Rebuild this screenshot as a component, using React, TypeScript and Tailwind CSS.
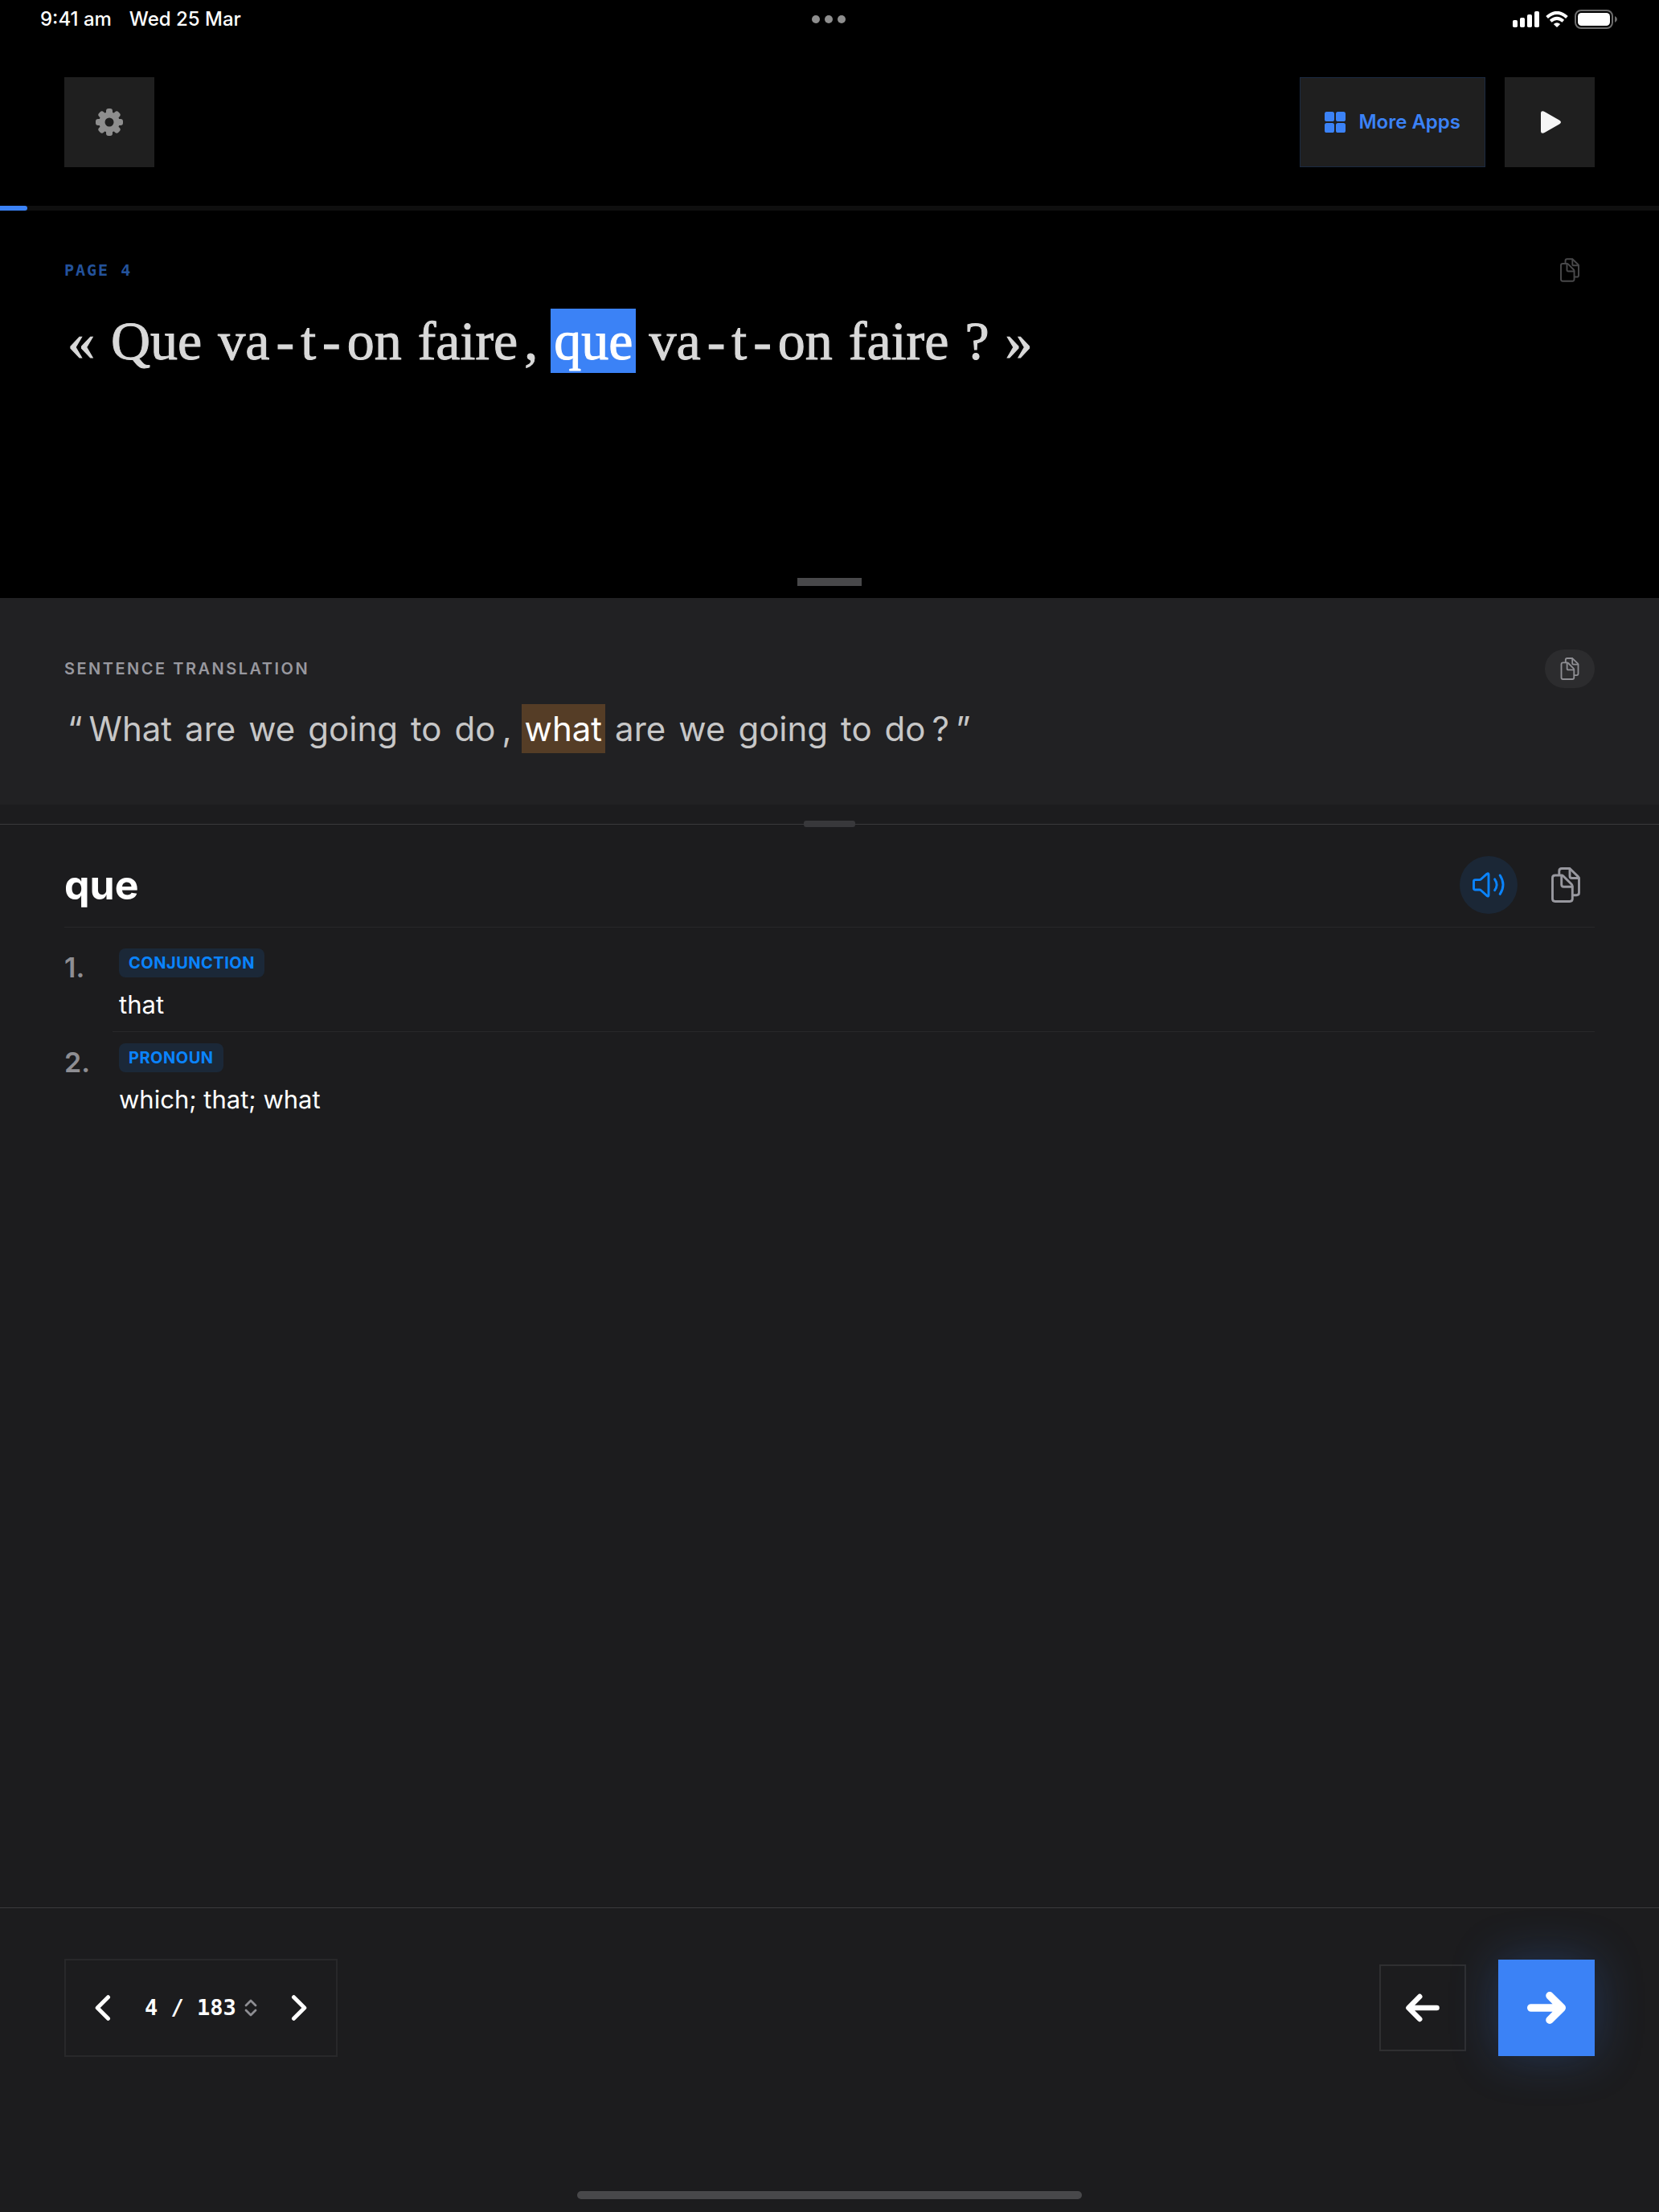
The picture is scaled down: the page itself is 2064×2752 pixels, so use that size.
import { clsx } from "clsx";

type Token = { text: string; tight?: boolean; active?: boolean };

// tight: no gap after the token
const sentence: Token[] = [
  { text: "«" },
  { text: "Que" },
  { text: "va", tight: true },
  { text: "-", tight: true },
  { text: "t", tight: true },
  { text: "-", tight: true },
  { text: "on" },
  { text: "faire", tight: true },
  { text: "," },
  { text: "que", active: true },
  { text: "va", tight: true },
  { text: "-", tight: true },
  { text: "t", tight: true },
  { text: "-", tight: true },
  { text: "on" },
  { text: "faire" },
  { text: "?" },
  { text: "»" },
];

const translation: Token[] = [
  { text: "“", tight: true },
  { text: "What" },
  { text: "are" },
  { text: "we" },
  { text: "going" },
  { text: "to" },
  { text: "do", tight: true },
  { text: "," },
  { text: "what", active: true },
  { text: "are" },
  { text: "we" },
  { text: "going" },
  { text: "to" },
  { text: "do", tight: true },
  { text: "?", tight: true },
  { text: "”" },
];

const definitions = [
  { pos: "CONJUNCTION", text: "that" },
  { pos: "PRONOUN", text: "which; that; what" },
];

function CopyIcon({ className }: { className?: string }) {
  return (
    <svg
      viewBox="0 0 36 44"
      className={className}
      fill="none"
      stroke="currentColor"
      strokeWidth="2.9"
      strokeLinecap="round"
      strokeLinejoin="round"
    >
      <path d="M4.5 10H12.5Q14 10 15 11L25.3 21.3Q26.3 22.3 26.3 24V39.3Q26.3 42.5 23 42.5H4.7Q1.5 42.5 1.5 39.3V13.2Q1.5 10 4.7 10Z" />
      <path d="M12.7 10.4V21.5Q12.7 24.2 15.4 24.2H26" />
      <path d="M9.8 9.6V4.7Q9.8 1.5 13 1.5H21.5Q23 1.5 24 2.5L33.4 11.6Q34.5 12.7 34.5 14.2V31.6Q34.5 34.8 31.3 34.8H27.4" />
      <path d="M23 1.8V11Q23 13.5 25.6 13.5H34.2" />
    </svg>
  );
}

function GearIcon() {
  return (
    <svg viewBox="0 0 34 34" className="size-[34px]">
      <mask id="gear-hole">
        <rect width="34" height="34" fill="#fff" />
        <circle cx="17" cy="17" r="5.5" fill="#000" />
      </mask>
      <g fill="currentColor" mask="url(#gear-hole)">
        <circle cx="17" cy="17" r="12.8" />
        <rect x="13" y="0" width="8" height="34" rx="3" />
        <rect x="13" y="0" width="8" height="34" rx="3" transform="rotate(45 17 17)" />
        <rect x="13" y="0" width="8" height="34" rx="3" transform="rotate(90 17 17)" />
        <rect x="13" y="0" width="8" height="34" rx="3" transform="rotate(135 17 17)" />
      </g>
    </svg>
  );
}

function SpeakerIcon() {
  return (
    <svg
      viewBox="0 0 40 32"
      className="h-8 w-10"
      fill="none"
      stroke="currentColor"
      strokeWidth="2.9"
      strokeLinecap="round"
      strokeLinejoin="round"
    >
      <path d="M3.5 9.6H8.6Q9.8 9.6 10.6 8.8L18 2.1Q20 .8 20 3.2V28.4Q20 30.8 18 29.5L10.6 22.8Q9.8 22 8.6 22H3.5Q1.5 22 1.5 20V11.6Q1.5 9.6 3.5 9.6Z" />
      <path d="M27.6 8.8Q32.6 15.7 27.6 22.6" />
      <path d="M34.2 4Q41.8 15.7 34.2 27.4" />
    </svg>
  );
}

function StatusBar() {
  return (
    <div className="grid h-12 grid-cols-3 items-center pr-[52px] pl-[50px] text-2xl font-medium text-white">
      <div className="flex gap-[22px]">
        <span>9:41 am</span>
        <span>Wed 25 Mar</span>
      </div>
      <div className="flex justify-center gap-[6px]">
        <span className="size-[10px] rounded-full bg-[#8e8e8e]" />
        <span className="size-[10px] rounded-full bg-[#8e8e8e]" />
        <span className="size-[10px] rounded-full bg-[#8e8e8e]" />
      </div>
      <div className="flex items-center justify-end gap-2">
        <svg viewBox="0 0 33 20" className="h-5 w-[33px]" fill="#fff">
          <rect x="0" y="11" width="6" height="9" rx="1.8" />
          <rect x="9" y="8" width="6" height="12" rx="1.8" />
          <rect x="18" y="4" width="6" height="16" rx="1.8" />
          <rect x="27" y="0" width="6" height="20" rx="1.8" />
        </svg>
        <svg viewBox="0 0 28 20" className="h-5 w-7" fill="none" stroke="#fff" strokeWidth="4">
          <path d="M1.6 7.4Q14 -3.6 26.4 7.4" />
          <path d="M6.2 12.2Q14 5.4 21.8 12.2" />
          <path d="M14 20L9.8 16Q14 12.6 18.2 16Z" fill="#fff" stroke="none" />
        </svg>
        <svg viewBox="0 0 53 24" className="h-6 w-[53px]">
          <rect x="1" y="1" width="46" height="22" rx="7" fill="none" stroke="#6e6e6e" strokeWidth="2" />
          <rect x="4" y="4" width="40" height="16" rx="4.5" fill="#fff" />
          <path d="M50 8Q53 9.4 53 12Q53 14.6 50 16Z" fill="#6e6e6e" />
        </svg>
      </div>
    </div>
  );
}

function Tokens({ tokens, gap, highlight }: { tokens: Token[]; gap: string; highlight: string }) {
  return (
    <>
      {tokens.map((token, i) => (
        <span key={i} className={clsx("px-1", !token.tight && gap, token.active && highlight)}>
          {token.text}
        </span>
      ))}
    </>
  );
}

export default function App() {
  return (
    <div className="flex min-h-screen flex-col bg-[#1c1c1e] font-['Inter','Liberation_Sans',sans-serif] text-white">
      <div className="flex flex-col bg-black">
        <StatusBar />

        <header className="flex items-center justify-between px-20 py-12">
          <button type="button" aria-label="Settings" className="flex size-28 items-center justify-center bg-[#1f1f1f] text-[#8e8e8e]">
            <GearIcon />
          </button>
          <div className="flex gap-6">
            <button
              type="button"
              className="flex h-28 items-center gap-4 border border-[#1b2a42] bg-[#1f1f1f] px-[30px] text-2xl font-semibold text-[#3b82f6]"
            >
              <svg viewBox="0 0 26 26" className="size-[26px]" fill="currentColor">
                <rect x="0" y="0" width="12" height="12" rx="2.6" />
                <rect x="14" y="0" width="12" height="12" rx="2.6" />
                <rect x="0" y="14" width="12" height="12" rx="2.6" />
                <rect x="14" y="14" width="12" height="12" rx="2.6" />
              </svg>
              More Apps
            </button>
            <button type="button" aria-label="Play" className="flex size-28 items-center justify-center bg-[#1f1f1f] text-[#f5f5f5]">
              <svg viewBox="-3 0 28 28" className="size-7" fill="currentColor">
                <path d="M0 2.6Q0 .2 2.2 .2Q3.4 .2 4.6 .9L23 11.4Q25 12.6 25 14Q25 15.4 23 16.6L4.6 27.1Q3.4 27.8 2.2 27.8Q0 27.8 0 25.4Z" />
              </svg>
            </button>
          </div>
        </header>

        <div className="h-[6px] bg-[#0f0f0f]">
          <div className="h-full rounded-r-full bg-[#3b82f6]" style={{ width: `${(3 / 183) * 100}%` }} />
        </div>

        <section className="flex min-h-[482px] flex-col px-20 pt-[50px] pb-[15px]">
          <div className="flex h-12 items-center justify-between">
            <h2 className="font-['DejaVu_Sans_Mono',monospace] text-xl font-bold tracking-widest text-[#23529b]">PAGE 4</h2>
            <button type="button" aria-label="Copy sentence" className="flex h-12 w-[62px] items-center justify-center text-[#48484a]">
              <CopyIcon className="h-[30px] w-6" />
            </button>
          </div>
          <p className="mt-6 flex flex-wrap font-['Liberation_Serif',serif] text-[68px] leading-[80px] text-[#d9d9d9] [-webkit-text-stroke:1px_currentColor]">
            <Tokens tokens={sentence} gap="mr-3" highlight="bg-[#3b82f6] text-white" />
          </p>
          <div className="mt-auto h-[10px] w-20 self-center bg-[#48484a]" />
        </section>
      </div>

      <section className="bg-[#212123] px-20 py-16">
        <div className="flex items-center justify-between">
          <h2 className="text-xl font-semibold tracking-[0.125em] text-[#98989f]">SENTENCE TRANSLATION</h2>
          <button
            type="button"
            aria-label="Copy translation"
            className="flex h-12 w-[62px] items-center justify-center rounded-full bg-[#2c2c2e] text-[#8e8e93]"
          >
            <CopyIcon className="h-7 w-6" />
          </button>
        </div>
        <p className="mt-5 flex flex-wrap text-[42px] leading-[61px] text-[#c7c7c7]">
          <Tokens tokens={translation} gap="mr-2" highlight="bg-[#553d26] text-white" />
        </p>
      </section>

      <div className="relative flex h-12 items-center justify-center">
        <hr className="absolute inset-x-0 top-6 border-[#3a3a3c]" />
        <div className="relative h-2 w-16 rounded-[3px] bg-[#38383b]" />
      </div>

      <main className="flex-1 px-20">
        <div className="flex items-center justify-between border-b border-[#28282a] py-4">
          <h1 className="text-[50px] leading-[72px] font-bold">que</h1>
          <div className="flex gap-6">
            <button
              type="button"
              aria-label="Pronounce"
              className="flex size-18 items-center justify-center rounded-full bg-[#1b2736] text-[#0a84ff]"
            >
              <SpeakerIcon />
            </button>
            <button type="button" aria-label="Copy word" className="flex size-18 items-center justify-center text-[#98989f]">
              <CopyIcon className="h-11 w-9" />
            </button>
          </div>
        </div>

        <ol className="pt-3">
          {definitions.map((def, i) => (
            <li key={def.pos} className="flex">
              <span className="w-[60px] shrink-0 pt-4 text-[34px] leading-[44px] font-semibold text-[#8e8e93]">{i + 1}.</span>
              <div className={clsx("flex flex-1 flex-col items-start border-b pt-[14px] pb-[11px] pl-2", i === 0 ? "border-[#28282a]" : "border-transparent")}>
                <span className="rounded-lg bg-[#1b2838] px-3 text-xl leading-9 font-bold tracking-wide text-[#0a84ff]">{def.pos}</span>
                <span className="mt-3 text-[31px] leading-[44px]">{def.text}</span>
              </div>
            </li>
          ))}
        </ol>
      </main>

      <footer className="flex min-h-[379px] flex-col border-t border-[#3a3a3c] px-20 pt-[63px] pb-4">
        <div className="flex items-center justify-between">
          <div className="flex h-[122px] items-center border-2 border-[#28282a] px-9">
            <button type="button" aria-label="Previous page">
              <svg viewBox="0 0 20 32" className="h-8 w-5" fill="none" stroke="#fff" strokeWidth="5" strokeLinecap="round" strokeLinejoin="round">
                <path d="M16.5 2.7L3.2 16L16.5 29.3" />
              </svg>
            </button>
            <button type="button" className="mx-[42px] flex items-center gap-[10px] font-['DejaVu_Sans_Mono',monospace] text-[27px] leading-8 font-bold">
              4 / 183
              <svg viewBox="0 0 16 22" className="h-[22px] w-4" fill="none" stroke="#8e8e93" strokeWidth="2.8" strokeLinecap="round" strokeLinejoin="round">
                <path d="M2 8L8 2L14 8" />
                <path d="M2 14L8 20L14 14" />
              </svg>
            </button>
            <button type="button" aria-label="Next page">
              <svg viewBox="0 0 20 32" className="h-8 w-5" fill="none" stroke="#fff" strokeWidth="5" strokeLinecap="round" strokeLinejoin="round">
                <path d="M3.5 2.7L16.8 16L3.5 29.3" />
              </svg>
            </button>
          </div>
          <div className="flex items-center gap-10">
            <button type="button" aria-label="Back" className="flex size-[108px] items-center justify-center border-2 border-[#2f2f31]">
              <svg viewBox="0 0 42 36" className="h-9 w-[42px]" fill="none" stroke="#fff" strokeWidth="6.4" strokeLinecap="round" strokeLinejoin="round">
                <path d="M17.3 4L3.4 18L17.3 32M4 18H38.6" />
              </svg>
            </button>
            <button
              type="button"
              aria-label="Forward"
              className="flex size-[120px] items-center justify-center bg-[#3b82f6] shadow-[0_0_60px_rgba(59,130,246,0.25)]"
            >
              <svg viewBox="0 0 48 40" className="h-10 w-12" fill="none" stroke="#fff" strokeWidth="9.6" strokeLinecap="round" strokeLinejoin="round">
                <path d="M28 4.8L43.2 20L28 35.2M42 20H4.8" />
              </svg>
            </button>
          </div>
        </div>
        <div className="mt-auto h-[10px] w-[628px] max-w-full self-center rounded-full bg-[#48484a]" />
      </footer>
    </div>
  );
}
